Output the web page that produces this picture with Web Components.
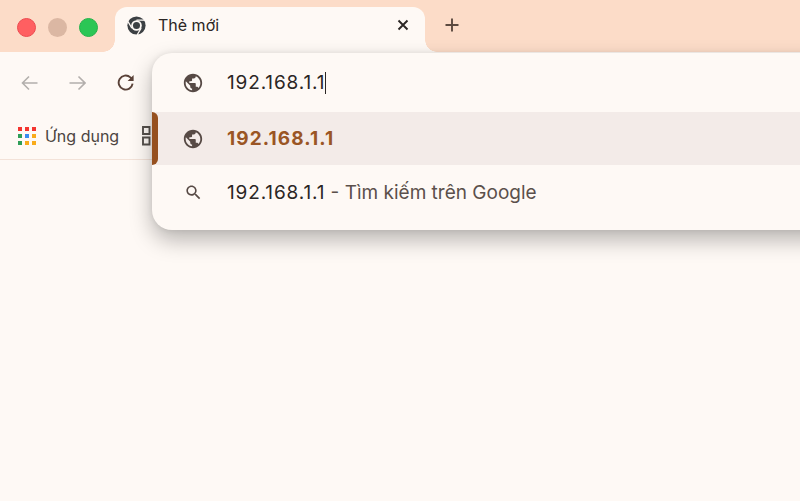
<!DOCTYPE html>
<html lang="vi">
<head>
<meta charset="utf-8">
<title>Thẻ mới</title>
<style>
    html, body { margin: 0; height: 100%; overflow: hidden; background: #fef9f5; }
    body { font-family: Inter, "Noto Sans", sans-serif; }
</style>
</head>
<body>
<browser-window>
    <tab-strip slot="strip" title-text="Thẻ mới"></tab-strip>
    <nav-toolbar slot="toolbar"></nav-toolbar>
    <bookmark-bar slot="bookmarks"></bookmark-bar>
    <omni-popup slot="popup">
        <omni-row kind="input" icon="globe">192.168.1.1</omni-row>
        <omni-row kind="selected" icon="globe">192.168.1.1</omni-row>
        <omni-row kind="search" icon="search" hint=" - Tìm kiếm trên Google">192.168.1.1</omni-row>
    </omni-popup>
</browser-window>

<script>
const globePath = 'M12 2C6.48 2 2 6.48 2 12s4.48 10 10 10 10-4.48 10-10S17.52 2 12 2zm-1 17.93c-3.95-.49-7-3.85-7-7.93 0-.62.08-1.21.21-1.79L9 15v1c0 1.1.9 2 2 2v1.93zm6.9-2.54c-.26-.81-1-1.39-1.9-1.39h-1v-3c0-.55-.45-1-1-1H8v-2h2c.55 0 1-.45 1-1V7h2c1.1 0 2-.9 2-2v-.41c2.93 1.19 5 4.06 5 7.41 0 2.08-.8 3.97-2.1 5.39z';
const searchPath = 'M15.5 14h-.79l-.28-.27C15.41 12.59 16 11.11 16 9.5 16 5.91 13.09 3 9.5 3S3 5.91 3 9.5 5.91 16 9.5 16c1.61 0 3.09-.59 4.23-1.57l.27.28v.79l5 4.99L20.49 19l-4.99-5zm-6 0C7.01 14 5 11.99 5 9.5S7.01 5 9.5 5 14 7.01 14 9.5 11.99 14 9.5 14z';

class BrowserWindow extends HTMLElement {
    constructor() {
        super();
        this.attachShadow({ mode: 'open' });
        this.shadowRoot.innerHTML = `
            <style>
                :host {
                    display: flex;
                    flex-direction: column;
                    position: relative;
                    height: 501px;
                    width: 800px;
                    overflow: hidden;
                    background: #fef9f5;
                }
                .popup {
                    position: absolute;
                    left: 152px;
                    top: 53px;
                }
            </style>
            <slot name="strip"></slot>
            <slot name="toolbar"></slot>
            <slot name="bookmarks"></slot>
            <div class="popup"><slot name="popup"></slot></div>
        `;
    }
}

class TabStrip extends HTMLElement {
    constructor() {
        super();
        this.attachShadow({ mode: 'open' });
    }

    connectedCallback() {
        const title = this.getAttribute('title-text');
        this.shadowRoot.innerHTML = `
            <style>
                :host {
                    display: flex;
                    align-items: flex-end;
                    height: 52px;
                    background: #fcdcc8;
                    flex: none;
                }
                .lights {
                    display: flex;
                    gap: 12px;
                    padding: 0 0 15px 17px;
                    width: 115px;
                    box-sizing: border-box;
                }
                .lights span {
                    width: 19px;
                    height: 19px;
                    border-radius: 50%;
                    box-sizing: border-box;
                }
                .red { background: #ff5f61; border: 1px solid #ec4b50; }
                .gray { background: #dbb7a3; }
                .green { background: #2bc655; border: 1px solid #25b34b; }
                .tab {
                    position: relative;
                    display: flex;
                    align-items: center;
                    width: 310px;
                    height: 45px;
                    margin-top: 7px;
                    box-sizing: border-box;
                    padding: 0 16px 9px 12px;
                    background: #fef9f5;
                    border-radius: 12px 12px 0 0;
                    font-size: 16px;
                    color: #2b2624;
                }
                .tab::before, .tab::after {
                    content: '';
                    position: absolute;
                    bottom: 0;
                    width: 12px;
                    height: 12px;
                    background: radial-gradient(circle at var(--cx) 0, #fcdcc8 11.5px, #fef9f5 12px);
                }
                .tab::before { left: -12px; --cx: 0; }
                .tab::after { right: -12px; --cx: 100%; }
                .title { margin-left: 12px; flex: 1; }
                .close { display: block; }
                .plus { display: block; margin: 0 0 20px 20px; }
            </style>
            <div class="lights">
                <span class="red"></span><span class="gray"></span><span class="green"></span>
            </div>
            <div class="tab">
                <svg width="19" height="19" viewBox="0 0 20 20" aria-hidden="true">
                    <circle cx="10" cy="10" r="9.6" fill="#3c4043"/>
                    <circle cx="10" cy="10" r="5.6" fill="#fef9f5"/>
                    <circle cx="10" cy="10" r="3.7" fill="#3c4043"/>
                    <path d="M10 4.4h8.4M5.1 12.8.9 5.6M14.9 12.8 10.6 20" stroke="#fef9f5" stroke-width="1.3" fill="none"/>
                </svg>
                <span class="title">${title}</span>
                <svg class="close" width="12" height="12" viewBox="0 0 12 12" aria-hidden="true">
                    <path d="M1.500 1.500l9 9M10.500 1.500l-9 9" stroke="#2b2624" stroke-width="1.9" fill="none"/>
                </svg>
            </div>
            <svg class="plus" width="14" height="14" viewBox="0 0 14 14" aria-hidden="true">
                <path d="M7 .5v13M.5 7h13" stroke="#5c4a40" stroke-width="1.9" fill="none"/>
            </svg>
        `;
    }
}

class NavToolbar extends HTMLElement {
    constructor() {
        super();
        this.attachShadow({ mode: 'open' });
        this.shadowRoot.innerHTML = `
            <style>
                :host {
                    display: flex;
                    align-items: center;
                    gap: 31px;
                    height: 60px;
                    box-sizing: border-box;
                    padding: 2px 0 0 21px;
                    flex: none;
                }
                svg { display: block; fill: none; stroke-width: 1.6; }
                .off { stroke: #b3afac; }
                .on { stroke: #5a4238; stroke-width: 1.9; }
            </style>
            <svg class="off" width="17" height="16" viewBox="0 0 17 16" aria-hidden="true">
                <path d="M16.500 8H1.500M8 1.500 1.500 8 8 14.500"/>
            </svg>
            <svg class="off" width="17" height="16" viewBox="0 0 17 16" aria-hidden="true">
                <path d="M.5 8h15.500M9.500 1.500 16 8l-6.500 6.500"/>
            </svg>
            <svg class="on" width="18" height="18" viewBox="0 0 18 18" aria-hidden="true">
                <path d="M15.600 9.600A7 7 0 1 1 13.400 3.400L15.500 5.500"/>
                <path d="M16.600 1v6h-6z" stroke="none" fill="#5a4238"/>
            </svg>
        `;
    }
}

class BookmarkBar extends HTMLElement {
    constructor() {
        super();
        this.attachShadow({ mode: 'open' });
        this.shadowRoot.innerHTML = `
            <style>
                :host {
                    display: flex;
                    align-items: center;
                    height: 48px;
                    padding-left: 18px;
                    box-sizing: border-box;
                    border-bottom: 1px solid #f3e2d8;
                    font-size: 16px;
                    color: #4c4541;
                    flex: none;
                }
                .apps {
                    display: grid;
                    grid-template-columns: repeat(3, 4px);
                    grid-auto-rows: 4px;
                    gap: 3px;
                    margin-right: 9px;
                }
                .apps i { display: block; }
                .label { width: 97px; }
                .groups { display: block; }
            </style>
            <div class="apps">
                <i style="background:#f4352f"></i><i style="background:#f4352f"></i><i style="background:#f4352f"></i>
                <i style="background:#2f9e58"></i><i style="background:#3b8df0"></i><i style="background:#f9ab1a"></i>
                <i style="background:#2f9e58"></i><i style="background:#f9ab1a"></i><i style="background:#f9ab1a"></i>
            </div>
            <span class="label">Ứng dụng</span>
            <svg class="groups" width="20" height="20" viewBox="0 0 20 20" aria-hidden="true">
                <path d="M1 1h6.500v7H1zM1 11.500h6.500v7H1z" fill="none" stroke="#55504c" stroke-width="1.900"/>
            </svg>
        `;
    }
}

class OmniPopup extends HTMLElement {
    constructor() {
        super();
        this.attachShadow({ mode: 'open' });
        this.shadowRoot.innerHTML = `
            <style>
                :host {
                    display: flex;
                    flex-direction: column;
                    width: 700px;
                    height: 177px;
                    background: #fef9f5;
                    border-radius: 20px;
                    box-shadow: 0 10px 22px rgba(0, 0, 0, 0.28), 0 0 6px rgba(0, 0, 0, 0.08);
                }
            </style>
            <slot></slot>
        `;
    }
}

class OmniRow extends HTMLElement {
    constructor() {
        super();
        this.attachShadow({ mode: 'open' });
    }

    connectedCallback() {
        const kind = this.getAttribute('kind');
        const isSearch = this.getAttribute('icon') === 'search';
        const iconPath = isSearch ? searchPath : globePath;
        const iconSize = isSearch ? 19 : 22;
        const hint = this.getAttribute('hint') || '';
        this.className = kind;
        this.shadowRoot.innerHTML = `
            <style>
                :host {
                    display: flex;
                    align-items: center;
                    position: relative;
                    padding-left: 30px;
                    font-size: 19px;
                    color: #2b2624;
                    flex: none;
                }
                :host(.input) { height: 59px; }
                :host(.selected) {
                    height: 53px;
                    background: #f3ebe8;
                    color: #9a5524;
                    font-weight: 700;
                }
                :host(.selected)::before {
                    content: '';
                    position: absolute;
                    left: 0;
                    top: 0;
                    bottom: 0;
                    width: 6px;
                    background: #96501f;
                    border-radius: 0 6px 6px 0;
                }
                :host(.search) { height: 55px; }
                .icon {
                    display: flex;
                    justify-content: center;
                    width: 22px;
                    margin-right: 23px;
                }
                svg { display: block; fill: #574a45; }
                .query { letter-spacing: 0.85px; }
                :host(.selected) .query { letter-spacing: 1.1px; }
                .hint { color: #5b504b; white-space: pre; }
                .caret {
                    display: inline-block;
                    width: 1px;
                    height: 22px;
                    background: #2b2624;
                    vertical-align: -5px;
                }
            </style>
            <span class="icon">
                <svg width="${iconSize}" height="${iconSize}" viewBox="0 0 24 24" aria-hidden="true"><path d="${iconPath}"/></svg>
            </span>
            <span><span class="query"><slot></slot></span>${kind === 'input' ? '<span class="caret"></span>' : ''}<span class="hint">${hint}</span></span>
        `;
    }
}

customElements.define('browser-window', BrowserWindow);
customElements.define('tab-strip', TabStrip);
customElements.define('nav-toolbar', NavToolbar);
customElements.define('bookmark-bar', BookmarkBar);
customElements.define('omni-popup', OmniPopup);
customElements.define('omni-row', OmniRow);
</script>
</body>
</html>
